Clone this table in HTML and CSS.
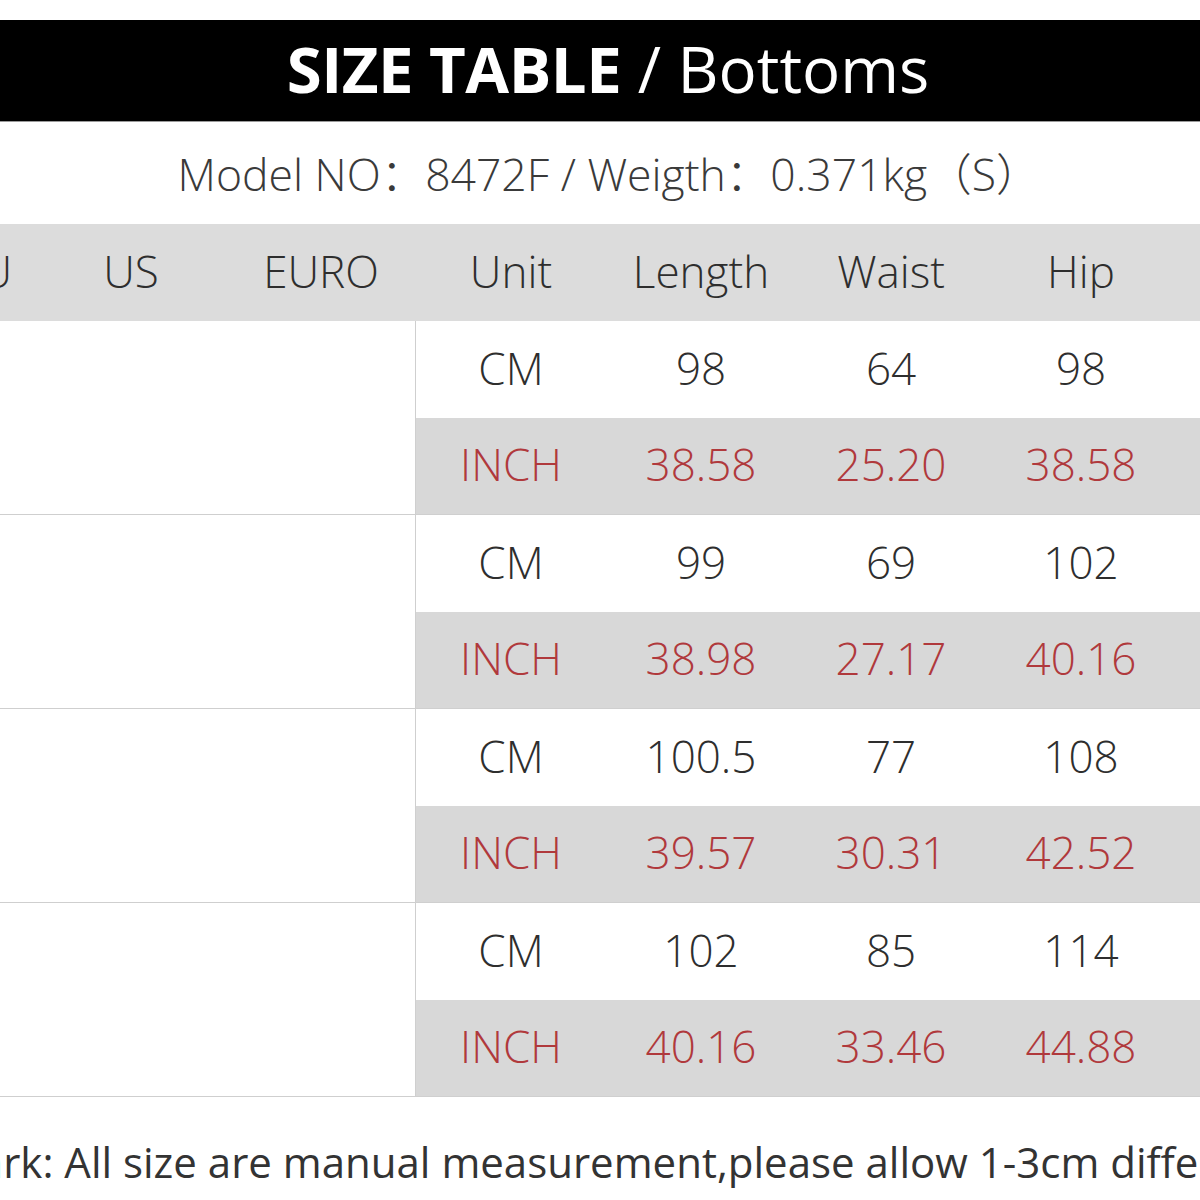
FILE: index.html
```html
<!DOCTYPE html>
<html lang="en">
<head>
<meta charset="utf-8">
<title>Size Table / Bottoms</title>
<link rel="stylesheet" href="styles.css">
</head>
<body>
<div class="sheet">
  <div class="title-bar">
    <span class="title-strong">SIZE TABLE</span><span class="title-light"> / Bottoms</span>
  </div>
  <div class="model">Model NO：8472F / Weigth：0.371kg（S）</div>

  <div class="row head">
    <div class="cell"></div>
    <div class="cell">AU</div>
    <div class="cell">US</div>
    <div class="cell">EURO</div>
    <div class="cell">Unit</div>
    <div class="cell">Length</div>
    <div class="cell">Waist</div>
    <div class="cell">Hip</div>
    <div class="cell"></div>
  </div>

  <div class="group">
    <div class="left"></div>
    <div class="cell cm">CM</div><div class="cell cm">98</div><div class="cell cm">64</div><div class="cell cm">98</div><div class="cell cm"></div>
    <div class="cell inch">INCH</div><div class="cell inch">38.58</div><div class="cell inch">25.20</div><div class="cell inch">38.58</div><div class="cell inch"></div>
  </div>
  <div class="group">
    <div class="left"></div>
    <div class="cell cm">CM</div><div class="cell cm">99</div><div class="cell cm">69</div><div class="cell cm">102</div><div class="cell cm"></div>
    <div class="cell inch">INCH</div><div class="cell inch">38.98</div><div class="cell inch">27.17</div><div class="cell inch">40.16</div><div class="cell inch"></div>
  </div>
  <div class="group">
    <div class="left"></div>
    <div class="cell cm">CM</div><div class="cell cm">100.5</div><div class="cell cm">77</div><div class="cell cm">108</div><div class="cell cm"></div>
    <div class="cell inch">INCH</div><div class="cell inch">39.57</div><div class="cell inch">30.31</div><div class="cell inch">42.52</div><div class="cell inch"></div>
  </div>
  <div class="group">
    <div class="left"></div>
    <div class="cell cm">CM</div><div class="cell cm">102</div><div class="cell cm">85</div><div class="cell cm">114</div><div class="cell cm"></div>
    <div class="cell inch">INCH</div><div class="cell inch">40.16</div><div class="cell inch">33.46</div><div class="cell inch">44.88</div><div class="cell inch"></div>
  </div>

  <div class="remark">Remark: All size are manual measurement,please allow 1-3cm difference</div>
</div>
</body>
</html>
```

FILE: styles.css
```css
html, body {
  margin: 0;
  padding: 0;
  background: #ffffff;
  overflow: hidden;
}

body {
  width: 1200px;
  height: 1200px;
  font-family: "Open Sans", "Noto Sans", "Noto Sans CJK SC", sans-serif;
  color: #2e2e2e;
}

.sheet {
  width: 1640px;
  margin-left: -220px;
  padding-top: 20px;
}

.title-bar {
  height: 102px;
  background: #000000;
  border-bottom: 1px solid #9a9a9a;
  display: flex;
  align-items: center;
  justify-content: center;
  color: #ffffff;
  font-size: 63.5px;
  line-height: 1;
  padding-left: 16px;
  padding-bottom: 4px;
  box-sizing: border-box;
}

.title-strong {
  font-weight: 700;
  letter-spacing: -0.5px;
}

.title-light {
  font-weight: 400;
  white-space: pre;
}

.model {
  height: 102px;
  display: flex;
  align-items: center;
  justify-content: center;
  font-size: 44.5px;
  font-weight: 300;
  color: #3a3a3a;
  padding-left: 18px;
  padding-bottom: 4px;
  box-sizing: border-box;
}

.row,
.group {
  display: grid;
  grid-template-columns: 150px 106px 190px 190px 190px 190px 190px 190px 1fr;
}

.head {
  height: 97px;
  background: #dcdcdc;
}

.cell {
  display: flex;
  align-items: center;
  justify-content: center;
  font-size: 44px;
  font-weight: 300;
  color: #2e2e2e;
  padding-bottom: 4px;
  box-sizing: border-box;
}

.group {
  grid-template-rows: 97px 96px;
  border-bottom: 1px solid #cfcfcf;
}

.left {
  grid-column: 1 / span 4;
  grid-row: 1 / span 2;
  border-right: 1px solid #cfcfcf;
}

.cm {
  background: #ffffff;
}

.inch {
  background: #d8d8d8;
  color: #b0393c;
}

.remark {
  height: 132px;
  display: flex;
  align-items: center;
  justify-content: center;
  white-space: nowrap;
  font-size: 42px;
  font-weight: 400;
  color: #333333;
  padding-bottom: 4px;
  box-sizing: border-box;
}
```
